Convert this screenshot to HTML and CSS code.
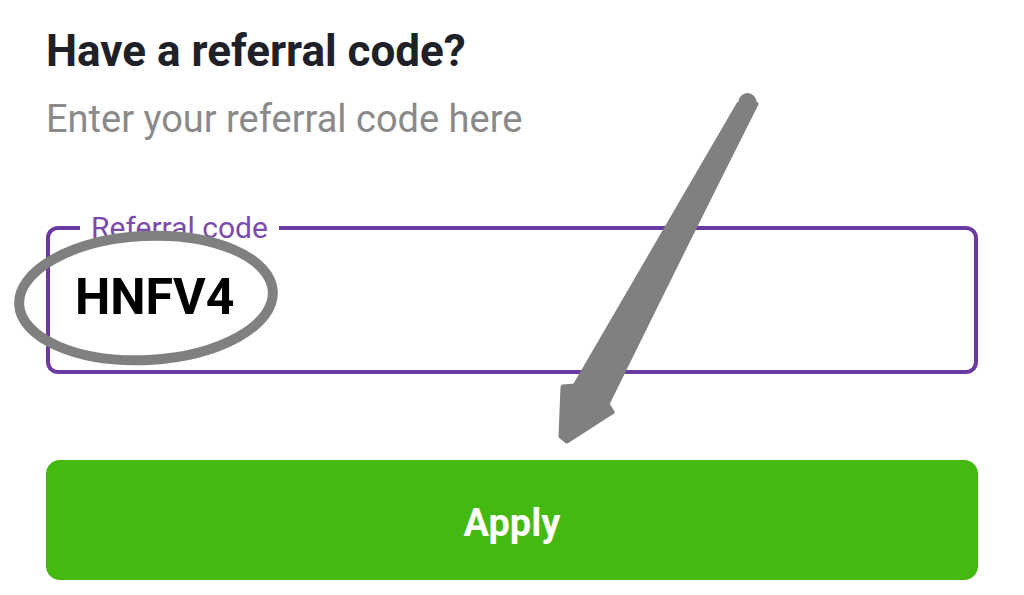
FILE: index.html
```html
<!DOCTYPE html>
<html lang="en">
<head>
<meta charset="utf-8">
<title>Referral code</title>
<link rel="stylesheet" href="styles.css">
</head>
<body>
<main class="page">
  <h1 class="title">Have a referral code?</h1>
  <p class="subtitle">Enter your referral code here</p>
  <fieldset class="field">
    <legend class="field-label">Referral code</legend>
    <div class="field-value">HNFV4</div>
  </fieldset>
  <button class="apply" type="button">Apply</button>
  <svg class="annot" width="1024" height="595" viewBox="0 0 1024 595" aria-hidden="true">
    <ellipse cx="146" cy="298" rx="127" ry="62" transform="rotate(-3 146 298)" fill="none" stroke="#808080" stroke-width="10"/>
    <path d="M739 104 Q 660 240 575 386 L 563 387 L 561 436 L 567 441 L 612 412 L 607 404 Q 680 255 756 104 Z" fill="#808080" stroke="#808080" stroke-width="5" stroke-linejoin="round"/>
    <circle cx="747.5" cy="102" r="9" fill="#808080"/>
  </svg>
</main>
</body>
</html>
```

FILE: styles.css
```css
* { box-sizing: border-box; }
html, body { margin: 0; background: #ffffff; }
body { font-family: Roboto, "Liberation Sans", sans-serif; }

.page {
  position: relative;
  width: 1024px;
  height: 595px;
  padding: 25px 46px 0 46px;
  display: flex;
  flex-direction: column;
  overflow: hidden;
}

.title {
  margin: 0;
  font-size: 44px;
  line-height: 52px;
  font-weight: 700;
  color: #1e2127;
}

.subtitle {
  margin: 19px 0 0 0;
  font-size: 38px;
  line-height: 46px;
  font-weight: 400;
  color: #8a8a8a;
}

.field {
  margin: 71px 0 0 0;
  padding: 26px 0 45px 25px;
  border: 4px solid #6b3aa0;
  border-radius: 12px;
  min-width: 0;
}

.field-label {
  margin-left: 5px;
  padding: 0 11px;
  font-size: 30px;
  line-height: 30px;
  color: #7a4bab;
}

.field-value {
  font-size: 50px;
  line-height: 56px;
  font-weight: 700;
  color: #000000;
}

.apply {
  margin-top: 86px;
  height: 120px;
  border: 0;
  border-radius: 14px;
  background: #44b912;
  color: #ffffff;
  font-family: Roboto, "Liberation Sans", sans-serif;
  font-size: 38px;
  font-weight: 700;
  padding: 6px 0 0 0;
}

.annot {
  position: absolute;
  left: 0;
  top: 0;
  pointer-events: none;
}
```
